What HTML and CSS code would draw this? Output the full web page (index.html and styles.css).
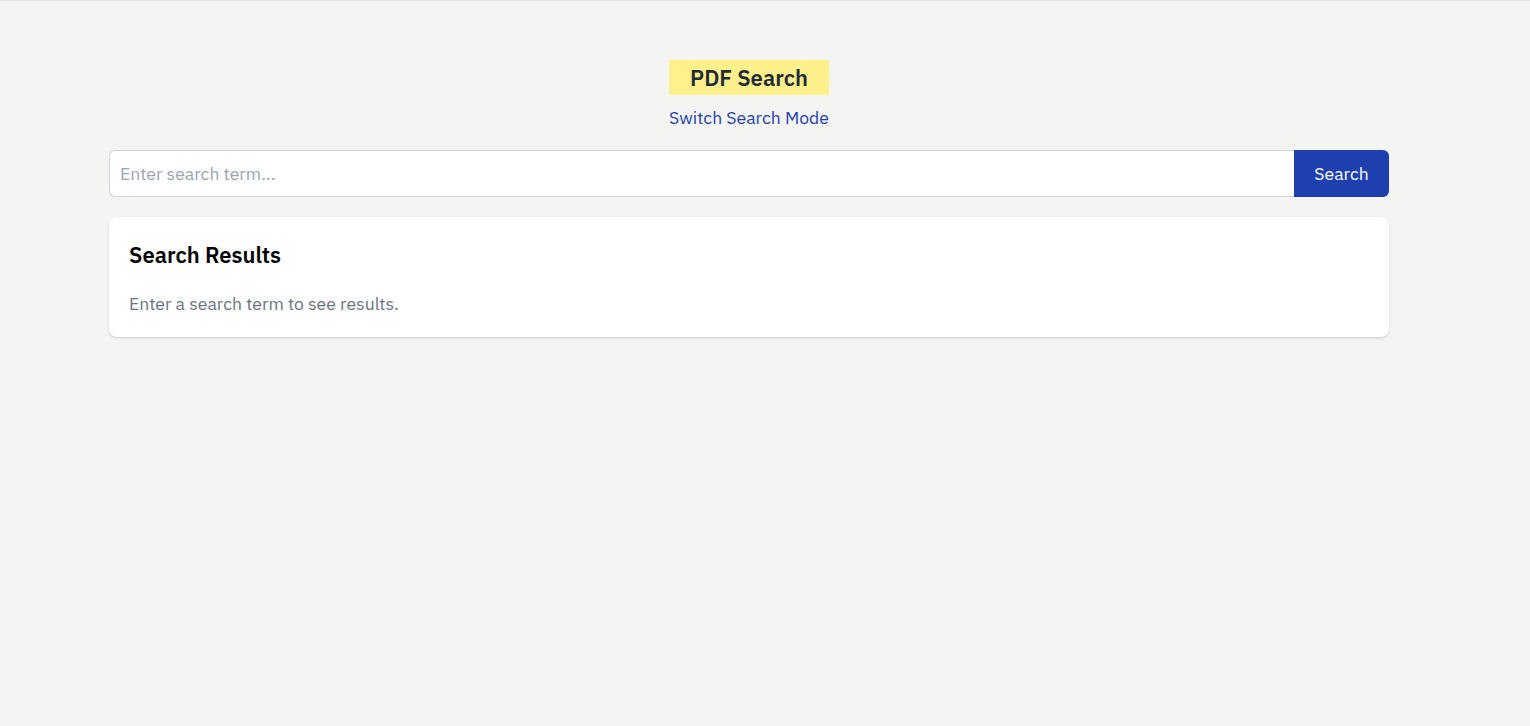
FILE: index.html
```html
<!DOCTYPE html>
<html lang="en">
<head>
<meta charset="utf-8">
<title>PDF Search</title>
<link rel="stylesheet" href="styles.css">
</head>
<body>
<div class="page">
  <main class="container">
    <header class="header">
      <h1 class="title">PDF Search</h1>
      <a class="mode-link" href="#">Switch Search Mode</a>
    </header>
    <form class="search-form">
      <input class="search-input" type="text" placeholder="Enter search term..." autofocus>
      <button class="search-button" type="button">Search</button>
    </form>
    <section class="results">
      <h2 class="results-title">Search Results</h2>
      <p class="results-empty">Enter a search term to see results.</p>
    </section>
  </main>
</div>
</body>
</html>
```
FILE: styles.css
```css
* { box-sizing: border-box; }
html, body { margin: 0; padding: 0; }
body {
  background: #f4f4f2;
  font-family: "IBM Plex Sans", "Noto Sans", "Liberation Sans", sans-serif;
  font-size: 17.6px;
  color: #111827;
  border-top: 1px solid #e3e3e8;
  min-height: 726px;
}
.page { padding: 0 32px 0 0; }
.container {
  max-width: 1280px;
  margin: 0 auto;
  padding-top: 59px;
}
.header {
  display: flex;
  flex-direction: column;
  align-items: center;
}
.title {
  margin: 0;
  background: #fef08a;
  color: #1f2937;
  font-size: 22px;
  font-weight: 600;
  line-height: 35px;
  height: 35px;
  padding: 0 21px;
}
.mode-link {
  margin-top: 11px;
  color: #1e40af;
  font-size: 17.6px;
  line-height: 24px;
  text-decoration: none;
}
.search-form {
  display: flex;
  margin-top: 20px;
  height: 47px;
}
.search-input {
  flex: 1;
  border: 1px solid #d1d5db;
  border-right: none;
  border-radius: 6px 0 0 6px;
  background: #fff;
  padding: 0 10px;
  font-family: inherit;
  font-size: 17.6px;
  color: #111827;
  outline: none;
}
.search-input::placeholder { color: #9ca3af; }
.search-button {
  width: 95px;
  border: none;
  border-radius: 0 6px 6px 0;
  background: #1e40af;
  color: #fff;
  font-family: inherit;
  font-size: 17.6px;
  cursor: pointer;
}
.results {
  margin-top: 20px;
  background: #fff;
  border-radius: 8px;
  box-shadow: 0 1px 3px rgba(0,0,0,0.12), 0 1px 2px rgba(0,0,0,0.06);
  padding: 24px 20px 20px;
}
.results-title {
  margin: 0;
  font-size: 22px;
  font-weight: 600;
  line-height: 28px;
  color: #000;
}
.results-empty {
  margin: 22px 0 0;
  font-size: 17.6px;
  line-height: 26px;
  color: #6b7280;
}
```
